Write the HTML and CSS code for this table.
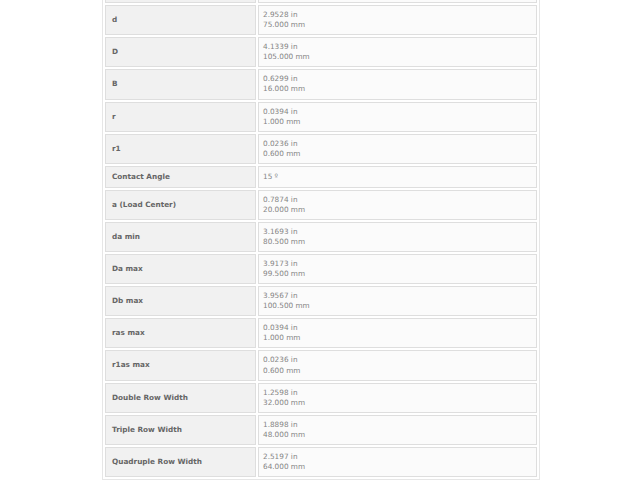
FILE: index.html
```html
<!DOCTYPE html>
<html>
<head>
<meta charset="utf-8">
<link rel="stylesheet" href="styles.css">
</head>
<body>
<div class="page">
<table class="specs">
<tr class="hidden-row"><td class="label">&nbsp;</td><td class="value">&nbsp;<br>&nbsp;</td></tr>
<tr><td class="label">d</td><td class="value">2.9528 in<br>75.000 mm</td></tr>
<tr><td class="label">D</td><td class="value">4.1339 in<br>105.000 mm</td></tr>
<tr><td class="label">B</td><td class="value">0.6299 in<br>16.000 mm</td></tr>
<tr><td class="label">r</td><td class="value">0.0394 in<br>1.000 mm</td></tr>
<tr><td class="label">r1</td><td class="value">0.0236 in<br>0.600 mm</td></tr>
<tr class="single"><td class="label">Contact Angle</td><td class="value">15 º</td></tr>
<tr><td class="label">a (Load Center)</td><td class="value">0.7874 in<br>20.000 mm</td></tr>
<tr><td class="label">da min</td><td class="value">3.1693 in<br>80.500 mm</td></tr>
<tr><td class="label">Da max</td><td class="value">3.9173 in<br>99.500 mm</td></tr>
<tr><td class="label">Db max</td><td class="value">3.9567 in<br>100.500 mm</td></tr>
<tr><td class="label">ras max</td><td class="value">0.0394 in<br>1.000 mm</td></tr>
<tr><td class="label">r1as max</td><td class="value">0.0236 in<br>0.600 mm</td></tr>
<tr><td class="label">Double Row Width</td><td class="value">1.2598 in<br>32.000 mm</td></tr>
<tr><td class="label">Triple Row Width</td><td class="value">1.8898 in<br>48.000 mm</td></tr>
<tr><td class="label">Quadruple Row Width</td><td class="value">2.5197 in<br>64.000 mm</td></tr>
</table>
</div>
</body>
</html>
```
FILE: styles.css
```css
html, body {
  margin: 0;
  padding: 0;
  background: #ffffff;
  overflow: hidden;
}
.page {
  padding-left: 102px;
  height: 480px;
  overflow: hidden;
}
.specs {
  margin-top: -30px;
  width: 438px;
  border: 1px solid #e6e6e6;
  border-collapse: separate;
  border-spacing: 2px;
  font-family: "DejaVu Sans", Verdana, sans-serif;
  font-size: 7.3px;
  line-height: 10.07px;
}
.specs td {
  border: 1px solid #dedede;
  padding: 4px 5px 4px 6px;
  vertical-align: middle;
}
.specs .label {
  width: 138px;
  background: #f1f1f1;
  color: #666666;
  font-weight: bold;
}
.specs .value {
  padding-left: 4px;
  background: #fbfbfb;
  color: #858585;
}
.specs .single td {
  padding-top: 5px;
  padding-bottom: 5px;
}
```
